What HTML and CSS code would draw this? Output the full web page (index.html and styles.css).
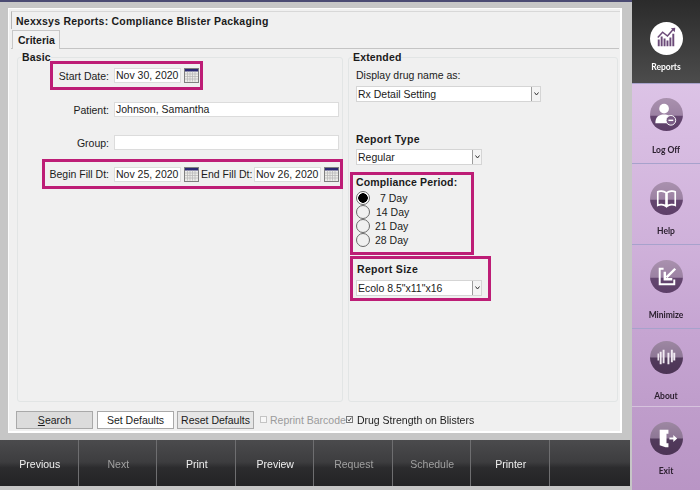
FILE: index.html
```html
<!DOCTYPE html>
<html lang="en">
<head>
<meta charset="utf-8">
<title>Nexxsys Reports</title>
<link rel="stylesheet" href="styles.css">
</head>
<body>
<svg class="defs" width="0" height="0" aria-hidden="true">
  <symbol id="cal" viewBox="0 0 15 15">
    <rect x="0.5" y="0.5" width="14" height="14" fill="#ecece8" stroke="#808080"/>
    <rect x="1" y="1" width="13" height="2.500" fill="#2a2a72"/>
    <path d="M1 6h13M1 8.500h13M1 11h13M3.500 3.500v10M6 3.500v10M8.500 3.500v10M11 3.500v10" stroke="#b4b4b4" stroke-width="0.700" fill="none"/>
  </symbol>
  <linearGradient id="orb" x1="0" y1="0" x2="0" y2="1">
    <stop offset="0" stop-color="#a991ae"/>
    <stop offset="0.52" stop-color="#9c82a3"/>
    <stop offset="0.56" stop-color="#64466f"/>
    <stop offset="1" stop-color="#5d3f68"/>
  </linearGradient>
  <linearGradient id="orbdark" x1="0" y1="0" x2="0" y2="1">
    <stop offset="0" stop-color="#9d88a2"/>
    <stop offset="0.48" stop-color="#8e7796"/>
    <stop offset="0.52" stop-color="#523a5c"/>
    <stop offset="1" stop-color="#4c3455"/>
  </linearGradient>
</svg>
<div class="app">
  <div class="left">
    <main class="window">
      <h1 class="title">Nexxsys Reports: Compliance Blister Packaging</h1>
      <div class="tabs"><span class="tab">Criteria</span></div>
      <div class="columns">
        <fieldset class="group basic">
          <legend>Basic</legend>
          <div class="row mark start">
            <label class="lab lab-start">Start Date:</label>
            <span class="field date">Nov 30, 2020</span>
            <svg class="cal"><use href="#cal"/></svg>
          </div>
          <div class="row patient">
            <label class="lab lab-plain">Patient:</label>
            <span class="field wide">Johnson, Samantha</span>
          </div>
          <div class="row grp">
            <label class="lab lab-plain">Group:</label>
            <span class="field wide"></span>
          </div>
          <div class="row mark fill">
            <label class="lab lab-begin">Begin Fill Dt:</label>
            <span class="field date">Nov 25, 2020</span>
            <svg class="cal"><use href="#cal"/></svg>
            <label class="lab-end">End Fill Dt:</label>
            <span class="field date">Nov 26, 2020</span>
            <svg class="cal"><use href="#cal"/></svg>
          </div>
        </fieldset>
        <fieldset class="group extended">
          <legend>Extended</legend>
          <div class="cap display-cap">Display drug name as:</div>
          <div class="select s-wide"><span>Rx Detail Setting</span><i class="drop"><svg width="5" height="4" viewBox="0 0 5 4"><path d="M0.5 0.5L2.500 3L4.500 0.5" fill="none" stroke="#333"/></svg></i></div>
          <div class="cap strong type-cap">Report Type</div>
          <div class="select s-mid"><span>Regular</span><i class="drop"><svg width="5" height="4" viewBox="0 0 5 4"><path d="M0.5 0.5L2.500 3L4.500 0.5" fill="none" stroke="#333"/></svg></i></div>
          <div class="mark period">
            <div class="period-title">Compliance Period:</div>
            <label class="radio"><input type="radio" name="p" checked><span class="first">7 Day</span></label>
            <label class="radio"><input type="radio" name="p"><span class="second">14 Day</span></label>
            <label class="radio"><input type="radio" name="p"><span>21 Day</span></label>
            <label class="radio"><input type="radio" name="p"><span>28 Day</span></label>
          </div>
          <div class="mark size">
            <div class="cap strong size-cap">Report Size</div>
            <div class="select s-mid"><span>Ecolo 8.5"x11"x16</span><i class="drop"><svg width="5" height="4" viewBox="0 0 5 4"><path d="M0.5 0.5L2.500 3L4.500 0.5" fill="none" stroke="#333"/></svg></i></div>
          </div>
        </fieldset>
      </div>
      <div class="actions">
        <button class="btn search"><u>S</u>earch</button>
        <button class="btn white">Set Defaults</button>
        <button class="btn reset">Reset Defaults</button>
        <span class="check off"></span><span class="check-text muted">Reprint Barcode</span>
        <span class="check on"><svg width="7" height="7" viewBox="0 0 7 7"><path d="M1 3.500L3 5.500L6 1" fill="none" stroke="#222" stroke-width="1.200"/></svg></span><span class="check-text strength">Drug Strength on Blisters</span>
      </div>
    </main>
    <nav class="toolbar">
      <span class="tool">Previous</span>
      <span class="tool dim">Next</span>
      <span class="tool">Print</span>
      <span class="tool">Preview</span>
      <span class="tool dim">Request</span>
      <span class="tool dim">Schedule</span>
      <span class="tool">Printer</span>
      <span class="tool"></span>
    </nav>
  </div>
  <aside class="side">
    <div class="item active h-reports">
      <svg class="orb" viewBox="0 0 34 34"><circle cx="17" cy="17" r="17" fill="#fff"/>
        <path d="M9 25v-7M12 25v-10M15 25v-8M18 25v-6M21 25v-9M24 25v-13" stroke="#6b4a78" stroke-width="2" fill="none"/>
        <path d="M8 16L13 10.500L18 14.500L24 7.500" stroke="#6b4a78" stroke-width="1.500" fill="none"/>
        <path d="M21.500 6.500L26 6L25.500 10.500Z" fill="#6b4a78"/></svg>
      <span>Reports</span>
    </div>
    <div class="item h-logoff">
      <svg class="orb" viewBox="0 0 34 34"><circle cx="17" cy="17" r="17" fill="url(#orb)"/>
        <circle cx="14.500" cy="11" r="5" fill="#fff"/>
        <path d="M5.500 26c0-7 4-9 9-9s9 2 9 9z" fill="#fff"/>
        <circle cx="21.500" cy="23" r="5" fill="#7a5c85" stroke="#fff"/><path d="M19 23h5" stroke="#fff" stroke-width="1.500"/></svg>
      <span>Log Off</span>
    </div>
    <div class="item h-help">
      <svg class="orb" viewBox="0 0 34 34"><circle cx="17" cy="17" r="17" fill="url(#orb)"/>
        <path d="M16.500 11C14 9 10 9 8 10v14c2-1 6-1 8.500 1zM17.500 11C20 9 24 9 26 10v14c-2-1-6-1-8.500 1z" fill="none" stroke="#fff" stroke-width="1.700"/></svg>
      <span>Help</span>
    </div>
    <div class="item h-min">
      <svg class="orb" viewBox="0 0 34 34"><circle cx="17" cy="17" r="17" fill="url(#orb)"/>
        <path d="M14 9H10v16h15v-5" fill="none" stroke="#fff" stroke-width="2"/>
        <path d="M26 9L17 18" stroke="#fff" stroke-width="2.500"/><path d="M14 12v9h9v-2.500h-6.500V12z" fill="#fff"/></svg>
      <span>Minimize</span>
    </div>
    <div class="item h-about">
      <svg class="orb" viewBox="0 0 34 34"><circle cx="17" cy="17" r="17" fill="url(#orb)"/>
        <path d="M11 11v13M14 9v14M19 12v12M22.500 9v13M25 12v8" stroke="#f1eaf2" stroke-width="2" fill="none"/><path d="M8.500 13v7" stroke="#f1eaf2" stroke-width="1.500"/></svg>
      <span>About</span>
    </div>
    <div class="item h-exit">
      <svg class="orb" viewBox="0 0 34 34"><circle cx="17" cy="17" r="17" fill="url(#orb)"/>
        <path d="M10 8h9v4h-2v10h2v4h-3l-6-2z" fill="#fff"/><path d="M20 17h5" stroke="#fff" stroke-width="2"/><path d="M24 13.500l4 3.500l-4 3.500z" fill="#fff"/></svg>
      <span>Exit</span>
    </div>
  </aside>
</div>
</body>
</html>
```
FILE: styles.css
```css
* { box-sizing: border-box; }
html, body { margin: 0; padding: 0; }
body {
  width: 700px;
  height: 490px;
  overflow: hidden;
  font-family: "Liberation Sans", Arial, sans-serif;
  font-size: 10.500px;
  color: #1b1b1b;
  background: #c9c9c9;
}
.defs { position: absolute; }
.app { display: flex; height: 490px; filter: blur(0.3px); }
.left {
  width: 632px;
  display: flex;
  flex-direction: column;
  background: #c6c6c6;
  border-top: 2px solid #4a4a72;
}
.window {
  margin: 6px 10px 0 8px;
  height: 425px;
  flex: none;
  background: #f0f0f0;
  border: 1px solid #fbfbfb;
  border-right: 2px solid #fff;
  border-bottom: 2px solid #fff;
  padding: 2px 0 0 2px;
  display: flex;
  flex-direction: column;
}
.title {
  margin: 0;
  height: 18px;
  flex: none;
  padding-left: 4px;
  font-size: 10.500px;
  font-weight: bold;
  letter-spacing: 0.230px;
  line-height: 18px;
  border-left: 1px solid #b5b5b5;
  border-top: 1px solid #d8d8d8;
}
.tabs {
  height: 19px;
  flex: none;
  margin-top: 1px;
  border-bottom: 1px solid #c4c4c4;
  margin-right: 1px;
}
.tab {
  display: block;
  width: 48px;
  height: 19px;
  margin-left: 1px;
  padding-left: 5px;
  font-weight: bold;
  line-height: 18px;
  background: #f2f2f2;
  border: 1px solid #c8c8c8;
  border-bottom: 0;
}
.columns { display: flex; height: 351px; flex: none; margin-left: 6px; margin-top: 2px; }
.group {
  margin: 0;
  padding: 0;
  min-width: 0;
  border: 1px solid #e2e5e5;
  border-radius: 3px;
  height: 351px;
}
.group legend {
  margin-left: 4px;
  padding: 0;
  font-weight: bold;
  font-size: 10.500px;
  line-height: 12px;
  letter-spacing: 0.150px;
}
.basic { width: 326px; }
.extended { width: 270px; margin-left: 5px; }
.row { display: flex; align-items: center; }
.mark { border: 3px solid #bd1d76; }
.start { width: 153px; margin: -2px 0 0 32px; height: 29px; }
.patient { margin: 12px 0 0 0; height: 15px; }
.grp { margin: 18px 0 0 0; height: 15px; }
.fill { width: 301px; height: 30px; margin: 9px 0 0 24px; }
.lab { text-align: right; flex: none; }
.lab-start { width: 56px; margin-right: 5px; }
.lab-plain { width: 91px; margin-right: 5px; }
.lab-begin { width: 64px; margin-right: 5px; }
.lab-end { flex: none; width: 51px; margin: 0 2px 0 0; text-align: left; white-space: nowrap; }
.field {
  display: block;
  height: 15px;
  padding-left: 1px;
  line-height: 13px;
  background: #fff;
  border: 1px solid #dcdcdc;
  overflow: hidden;
  white-space: nowrap;
}
.date { width: 67px; flex: none; }
.wide { width: 225px; }
.cal { width: 15px; height: 15px; flex: none; margin: 0 2px 0 3px; }
.cap { height: 12px; line-height: 12px; margin-left: 7px; }
.strong { font-weight: bold; letter-spacing: 0.300px; }
.display-cap { margin-top: 6px; }
.type-cap { margin-top: 31px; }
.select {
  display: flex;
  align-items: center;
  justify-content: space-between;
  height: 16px;
  margin: 5px 0 0 7px;
  padding-left: 1px;
  background: #fff;
  border: 1px solid #d5d5d5;
  white-space: nowrap;
}
.s-wide { width: 185px; }
.s-mid { width: 126px; margin-top: 4px; }
.drop {
  flex: none;
  display: flex;
  align-items: center;
  justify-content: center;
  width: 9px;
  height: 14px;
  background: #f4f4f4;
  border-left: 1px solid #9c9c9c;
}
.period { width: 124px; height: 83px; margin: 7px 0 0 1px; padding: 1px 0 0 3px; }
.period-title { font-weight: bold; letter-spacing: 0.150px; line-height: 12px; height: 15px; }
.radio { display: flex; align-items: center; height: 14px; margin-left: 1px; }
.radio input {
  appearance: none;
  flex: none;
  width: 14px;
  height: 14px;
  margin: 0 5px 0 -1px;
  background: transparent;
  border: 1px solid #6a6a6a;
  border-radius: 50%;
}
.radio input:checked { background: radial-gradient(circle, #000 0 4.500px, #fff 5px); }
.first { margin-left: 5px; }
.second { margin-left: 1px; }
.size { width: 141px; height: 45px; margin: 1px 0 0 1px; }
.size-cap { margin: 4px 0 0 4px; }
.size .select { margin-left: 3px; margin-top: 5px; }
.actions { display: flex; align-items: center; height: 19px; margin-top: 8px; margin-left: 5px; flex: none; }
.btn {
  flex: none;
  width: 77px;
  height: 18px;
  margin-right: 4px;
  padding: 0;
  font: inherit;
  color: #1b1b1b;
  border: 1px solid #a9a9a9;
  background: #e4e4e4;
}
.white { background: #fff; margin-right: 3px; }
.reset { background: #e6e6e6; margin-right: 6px; }
.search { background: #dcdcdc; }
.check {
  flex: none;
  display: flex;
  align-items: center;
  justify-content: center;
  width: 7px;
  height: 7px;
  border: 1px solid #c4c4c4;
  background: #f7f7f7;
}
.check.on { margin-left: 0; border-color: #777; }
.check-text { margin-left: 3px; white-space: nowrap; }
.strength { margin-left: 4px; }
.muted { color: #9b9b9b; }
.toolbar {
  display: grid;
  grid-template-columns: repeat(8, 1fr);
  width: 630px;
  height: 46px;
  flex: none;
  margin-top: 7px;
  padding-right: 2px;
  background: linear-gradient(#4b4b4d, #3d3d3f 48%, #2c2c2e 60%, #232325);
}
.tool {
  display: flex;
  align-items: center;
  justify-content: center;
  padding: 1px 0 0 2px;
  color: #f0f0f0;
  border-right: 1px solid #6e6e70;
}
.tool:last-child { border-right: 0; }
.dim { color: #a0a0a0; }
.side { width: 68px; display: flex; flex-direction: column; }
.item {
  display: flex;
  flex-direction: column;
  align-items: center;
  font-family: "Lato", "Liberation Sans", sans-serif;
  font-size: 8.500px;
  font-weight: bold;
  color: #2c2030;
  border-bottom: 1px solid #a7a2cc;
}
.orb { width: 33px; height: 33px; flex: none; }
.item span { line-height: 12px; }
.active { height: 84px; padding-top: 22px; color: #fff; background: linear-gradient(#2b2b2b, #4c4c4c); }
.active span { margin-top: 6px; }
.h-logoff { height: 80px; padding-top: 14px; background: linear-gradient(#dcc3e6, #d6bae0); }
.h-logoff span { margin-top: 13px; }
.h-help { height: 81px; padding-top: 18px; background: linear-gradient(#d6bae0, #cfb1da); }
.h-help span { margin-top: 10px; }
.h-min { height: 84px; padding-top: 15px; background: linear-gradient(#cfb1da, #c6a5d2); }
.h-min span { margin-top: 16px; }
.h-about { height: 78px; padding-top: 12px; background: linear-gradient(#c6a5d2, #bf9dcb); border-bottom-color: #d6c2dd; }
.h-about span { margin-top: 16px; }
.h-exit { height: 83px; padding-top: 15px; background: linear-gradient(#bf9dcb, #b995c5); border-bottom: 0; }
.h-exit span { margin-top: 10px; }
.h-exit .orb circle:first-child, .h-about .orb circle:first-child { fill: url(#orbdark); }
```
